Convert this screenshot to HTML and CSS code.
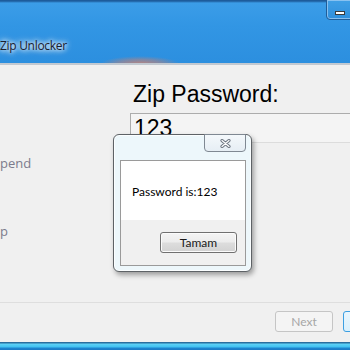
FILE: index.html
```html
<!DOCTYPE html>
<html>
<head>
<meta charset="utf-8">
<link rel="stylesheet" href="styles.css">
</head>
<body>
<div class="window">
  <div class="titlebar">
    <span class="title">Zip Unlocker</span>
    <div class="min-btn"><span class="min-glyph"></span></div>
  </div>
  <div class="main">
    <div class="sidebar">
      <div class="nav-item">pend</div>
      <div class="nav-item second">p</div>
    </div>
    <div class="content">
      <div class="heading">Zip Password:</div>
      <div class="input">123</div>
    </div>
    <div class="dialog">
      <div class="dlg-head">
        <div class="close-btn">
          <svg width="11" height="9" viewBox="0 0 11 9"><path d="M2 1.5 L9 7.5 M9 1.5 L2 7.5" stroke="#6d7580" stroke-width="3.2" stroke-linecap="round" fill="none"/><path d="M2 1.5 L9 7.5 M9 1.5 L2 7.5" stroke="#ffffff" stroke-width="1.2" stroke-linecap="round" fill="none"/></svg>
        </div>
      </div>
      <div class="dlg-body">
        <div class="dlg-msg">Password is:123</div>
        <div class="dlg-actions"><button class="btn ok">Tamam</button></div>
      </div>
    </div>
  </div>
  <div class="footer">
    <button class="btn next">Next</button>
    <button class="btn focus"></button>
  </div>
  <div class="taskbar"></div>
</div>
</body>
</html>
```
FILE: styles.css
```css
html, body { margin: 0; padding: 0; }
body { width: 350px; height: 350px; overflow: hidden; background: #f0f0f0; font-family: "Lato", "Open Sans", sans-serif; }
.window { width: 350px; height: 350px; display: flex; flex-direction: column; overflow: hidden; }

.titlebar {
  position: relative;
  height: 63px;
  flex: none;
  display: flex;
  justify-content: space-between;
  align-items: flex-start;
  background: linear-gradient(180deg, #1d5c9c 0, #1d5c9c 1px, #3b9de8 3px, #3296e4 40%, #2c8fdf 100%);
  border-bottom: 2px solid #c2c9d1;
  overflow: hidden;
}
.titlebar::after {
  content: "";
  position: absolute;
  left: 100px;
  top: 56px;
  width: 80px;
  height: 16px;
  background: radial-gradient(ellipse at center, rgba(236,128,92,0.75) 0, rgba(236,128,92,0.4) 40%, rgba(236,128,92,0) 70%);
}
.title {
  margin-top: 38px;
  margin-left: 0;
  font-family: "Open Sans", sans-serif;
  font-size: 12px;
  line-height: 15px;
  color: #1a2030;
  text-shadow: 0 0 4px #fff, 0 0 6px rgba(255,255,255,0.9), 0 0 8px rgba(255,255,255,0.7);
  letter-spacing: -0.3px;
}
.min-btn {
  flex: none;
  width: 30px;
  height: 21px;
  margin-right: -6px;
  margin-top: -1px;
  border: 1px solid #1f5d99;
  border-radius: 0 0 0 4px;
  box-shadow: inset 0 0 0 1px rgba(170,210,245,0.7);
  background: linear-gradient(180deg, #3f9fe6, #2f8fdc);
  padding-left: 8px;
  padding-top: 11px;
  box-sizing: border-box;
}
.min-glyph { display: block; width: 10px; height: 4px; background: #fff; border: 1px solid #3a3a3a; box-sizing: border-box; }

.main { position: relative; height: 237px; flex: none; display: flex; }
.sidebar { width: 130px; flex: none; display: flex; flex-direction: column; padding-top: 89px; box-sizing: border-box; }
.nav-item { font-family: "Open Sans", sans-serif; font-size: 13px; line-height: 18px; color: #7c7c8c; }
.nav-item.second { margin-top: 50px; }

.content { flex: 1; display: flex; flex-direction: column; padding-top: 16px; }
.heading { font-family: "Liberation Sans", Arial, sans-serif; font-size: 23px; line-height: 27px; color: #000; padding-left: 3px; }
.input {
  margin-top: 5px;
  height: 30px;
  box-sizing: border-box;
  border-top: 1px solid #acacac;
  border-left: 1px solid #acacac;
  border-bottom: 1px solid #dcdcdc;
  background: #f4f4f4;
  font-family: "Liberation Sans", Arial, sans-serif;
  font-size: 23px;
  line-height: 23px;
  padding: 3px 0 0 3px;
  color: #000;
}

.dialog {
  position: absolute;
  left: 113px;
  top: 69px;
  width: 139px;
  height: 138px;
  box-sizing: border-box;
  border: 1px solid #5e6266;
  border-radius: 6px;
  background: #edf7fb;
  box-shadow: 2px 3px 5px rgba(0,0,0,0.35), inset 0 0 0 1px #fbfeff;
  padding: 0 5px 5px 6px;
  display: flex;
  flex-direction: column;
}
.dlg-head { height: 25px; flex: none; display: flex; justify-content: flex-end; }
.close-btn {
  width: 42px;
  height: 18px;
  margin-top: -1px;
  box-sizing: border-box;
  border: 1px solid #7f8892;
  border-radius: 0 0 4px 4px;
  background: linear-gradient(180deg, #f4f8fb, #e6eef4);
  display: flex;
  align-items: center;
  justify-content: center;
}
.dlg-body {
  flex: 1;
  border: 1px solid #9a9a9a;
  background: #f0f0f0;
  display: flex;
  flex-direction: column;
}
.dlg-msg {
  height: 59px;
  flex: none;
  background: #fff;
  font-family: "Lato", sans-serif;
  font-size: 12px;
  line-height: 15px;
  padding: 23px 0 0 11px;
  box-sizing: border-box;
  color: #000;
}
.dlg-actions { display: flex; justify-content: flex-end; padding: 12px 8px 0 0; }

.btn {
  font-family: "Lato", sans-serif;
  font-size: 12px;
  font-weight: 400;
  padding: 0;
  box-sizing: border-box;
  border-radius: 3px;
}
.ok {
  width: 77px;
  height: 21px;
  border: 1px solid #707070;
  background: linear-gradient(180deg, #f4f4f4 0, #ececec 48%, #dddddd 52%, #d2d2d2 100%);
  box-shadow: inset 0 0 0 1px #fbfbfb;
  color: #1a1a1a;
}

.footer {
  height: 40px;
  flex: none;
  border-top: 1px solid #dedede;
  display: flex;
  justify-content: flex-end;
  align-items: flex-start;
  padding-top: 8px;
  box-sizing: border-box;
  gap: 10px;
}
.next {
  width: 58px;
  height: 21px;
  border: 1px solid #c5c5c5;
  background: #f4f4f4;
  color: #a6a6a6;
}
.focus {
  width: 58px;
  height: 21px;
  margin-right: -51px;
  border: 1px solid #3c9fe2;
  background: linear-gradient(180deg, #eaf6fd, #d9f0fc);
}

.taskbar {
  height: 8px;
  flex: none;
  background: linear-gradient(180deg, #2a6e9e 0, #2a6e9e 1px, #5fd2f6 2px, #3fc0f0 5px, #1f86cf 6px, #1a78c4 8px);
}
```
